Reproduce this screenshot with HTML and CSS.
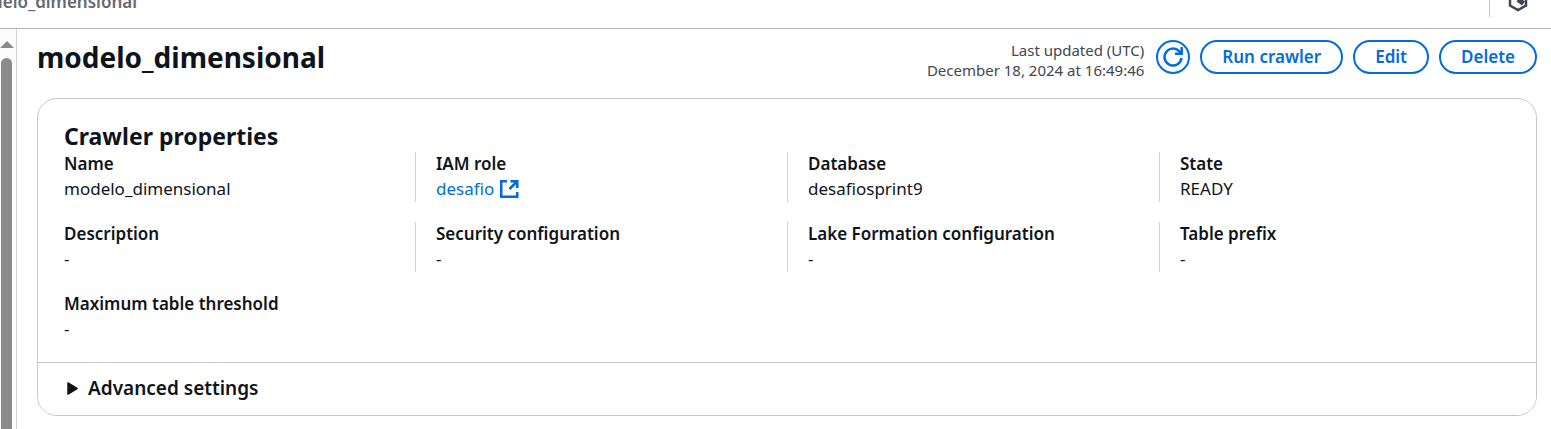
FILE: index.html
```html
<!DOCTYPE html>
<html lang="en">
<head>
<meta charset="utf-8">
<title>modelo_dimensional</title>
<link rel="stylesheet" href="styles.css">
</head>
<body>
<header class="topbar">
  <nav class="breadcrumb" aria-label="Breadcrumb"><span>modelo_dimensional</span></nav>
  <div class="tools">
    <button class="tool" type="button" aria-label="Security">
      <svg width="20" height="22" viewBox="0 0 20 22" fill="none" stroke="#424650" stroke-width="2.500"><path d="M10 1.500l8 4.500v9.500l-8 4.500-8-4.500V6z"/><path d="M10 9.500l5.500 4" stroke-width="5"/></svg>
    </button>
  </div>
</header>
<div class="shell">
  <div class="scroll" aria-hidden="true">
    <svg class="arrow" width="14" height="7" viewBox="0 0 14 7"><path d="M7 0l7 7H0z" fill="#8b8b8b"/></svg>
    <div class="thumb"></div>
  </div>
  <main class="content">
    <div class="heading">
      <h1>modelo_dimensional</h1>
      <div class="actions">
        <p class="updated">Last updated (UTC)<br>December 18, 2024 at 16:49:46</p>
        <button class="btn round" type="button" aria-label="Refresh">
          <svg width="20" height="20" viewBox="0 0 20 20" fill="none" stroke="#006ce0" stroke-width="2.500"><path d="M18.500 11a8.500 8.500 0 1 1-2.500-7l2.500 2.500"/><path d="M18.700 0v6.700H12"/></svg>
        </button>
        <button class="btn" type="button">Run crawler</button>
        <button class="btn" type="button">Edit</button>
        <button class="btn" type="button">Delete</button>
      </div>
    </div>
    <section class="card">
      <div class="body">
        <h2>Crawler properties</h2>
        <dl class="grid">
          <div><dt>Name</dt><dd>modelo_dimensional</dd></div>
          <div><dt>IAM role</dt><dd><a href="#">desafio<svg width="19" height="18" viewBox="0 0 19 18" fill="none" stroke="#006ce0" stroke-width="2.500"><path d="M7 1.250H1.250v15.500h16V12M10.500 1.250h6.750V8M17 1.500L9.500 9"/></svg></a></dd></div>
          <div><dt>Database</dt><dd>desafiosprint9</dd></div>
          <div><dt>State</dt><dd>READY</dd></div>
          <div><dt>Description</dt><dd>-</dd></div>
          <div><dt>Security configuration</dt><dd>-</dd></div>
          <div><dt>Lake Formation configuration</dt><dd>-</dd></div>
          <div><dt>Table prefix</dt><dd>-</dd></div>
          <div><dt>Maximum table threshold</dt><dd>-</dd></div>
        </dl>
      </div>
      <button class="advanced" type="button" aria-expanded="false">
        <svg width="11" height="13" viewBox="0 0 11 13"><path d="M1 1l9 5.500L1 12z" fill="#0f141a" stroke="#0f141a" stroke-width="1.500" stroke-linejoin="round"/></svg>
        Advanced settings
      </button>
    </section>
  </main>
</div>
</body>
</html>
```
FILE: styles.css
```css
* { box-sizing: border-box; }
body {
  margin: 0;
  height: 100vh;
  display: flex;
  flex-direction: column;
  overflow: hidden;
  background: #fff;
  color: #0f141a;
  font: 17px/25px "Noto Sans", "Open Sans", sans-serif;
}
h1, h2, p, dl, dd { margin: 0; }
h1, h2 { font-weight: 700; }
button { font: inherit; cursor: pointer; }
.topbar {
  flex: none;
  display: flex;
  justify-content: space-between;
  align-items: flex-end;
  height: 29px;
  border-bottom: 1px solid #b4b4bb;
  overflow: hidden;
}
.breadcrumb {
  display: flex;
  justify-content: flex-end;
  width: 137px;
  padding-bottom: 14px;
  color: #656871;
  font-weight: 600;
}
.tools {
  margin-bottom: 11px;
  padding: 0 23px 5px 18px;
  border-left: 1px solid #c6c6cd;
}
.tool {
  display: flex;
  padding: 0;
  border: 0;
  background: none;
}
.shell { flex: 1; display: flex; min-height: 0; }
.scroll {
  flex: none;
  display: flex;
  flex-direction: column;
  gap: 10px;
  width: 17px;
  padding-top: 12px;
  background: #fcfcfc;
  border-right: 1px solid #d0d0d8;
}
.arrow { display: block; }
.thumb {
  flex: 1;
  width: 11px;
  margin-left: 1px;
  border-radius: 6px 6px 0 0;
  background: #8b8b8b;
}
.content { flex: 1; min-width: 0; padding: 11px 14px 0 20px; }
.heading {
  display: flex;
  justify-content: space-between;
  align-items: flex-start;
  margin-bottom: 16px;
}
h1 { font-size: 28px; line-height: 34px; }
.actions { display: flex; align-items: center; gap: 10px; }
.updated {
  margin: 0 2px 2px 0;
  color: #424650;
  font-size: 15px;
  line-height: 20px;
  text-align: right;
}
.btn {
  height: 34px;
  margin-bottom: 8px;
  padding: 0 20px;
  border: 2px solid #006ce0;
  border-radius: 17px;
  background: #fff;
  color: #006ce0;
  font-weight: 600;
  line-height: 24px;
}
.round {
  display: grid;
  place-items: center;
  width: 34px;
  padding: 0;
}
.card {
  border: 1px solid #c6c6cd;
  border-radius: 20px;
  overflow: hidden;
}
.body { padding: 22px 25px 20px 26px; }
h2 { margin-bottom: 1px; font-size: 23px; line-height: 30px; }
.grid {
  display: grid;
  grid-template-columns: repeat(4, 1fr);
  gap: 20px;
  margin-left: -21px;
}
.grid div {
  padding: 0 0 1px 20px;
  border-left: 1px solid #d4d4da;
}
.grid div:nth-child(4n+1) { border-color: transparent; }
dt { font-weight: 600; line-height: 24px; }
a {
  display: inline-flex;
  align-items: center;
  gap: 6px;
  color: #006ce0;
  text-decoration: none;
}
.advanced {
  display: flex;
  align-items: center;
  gap: 10px;
  width: 100%;
  height: 53px;
  padding: 0 29px 2px;
  border: 0;
  border-top: 1px solid #c6c6cd;
  background: #fff;
  color: #0f141a;
  font-size: 19px;
  font-weight: 600;
}
```
